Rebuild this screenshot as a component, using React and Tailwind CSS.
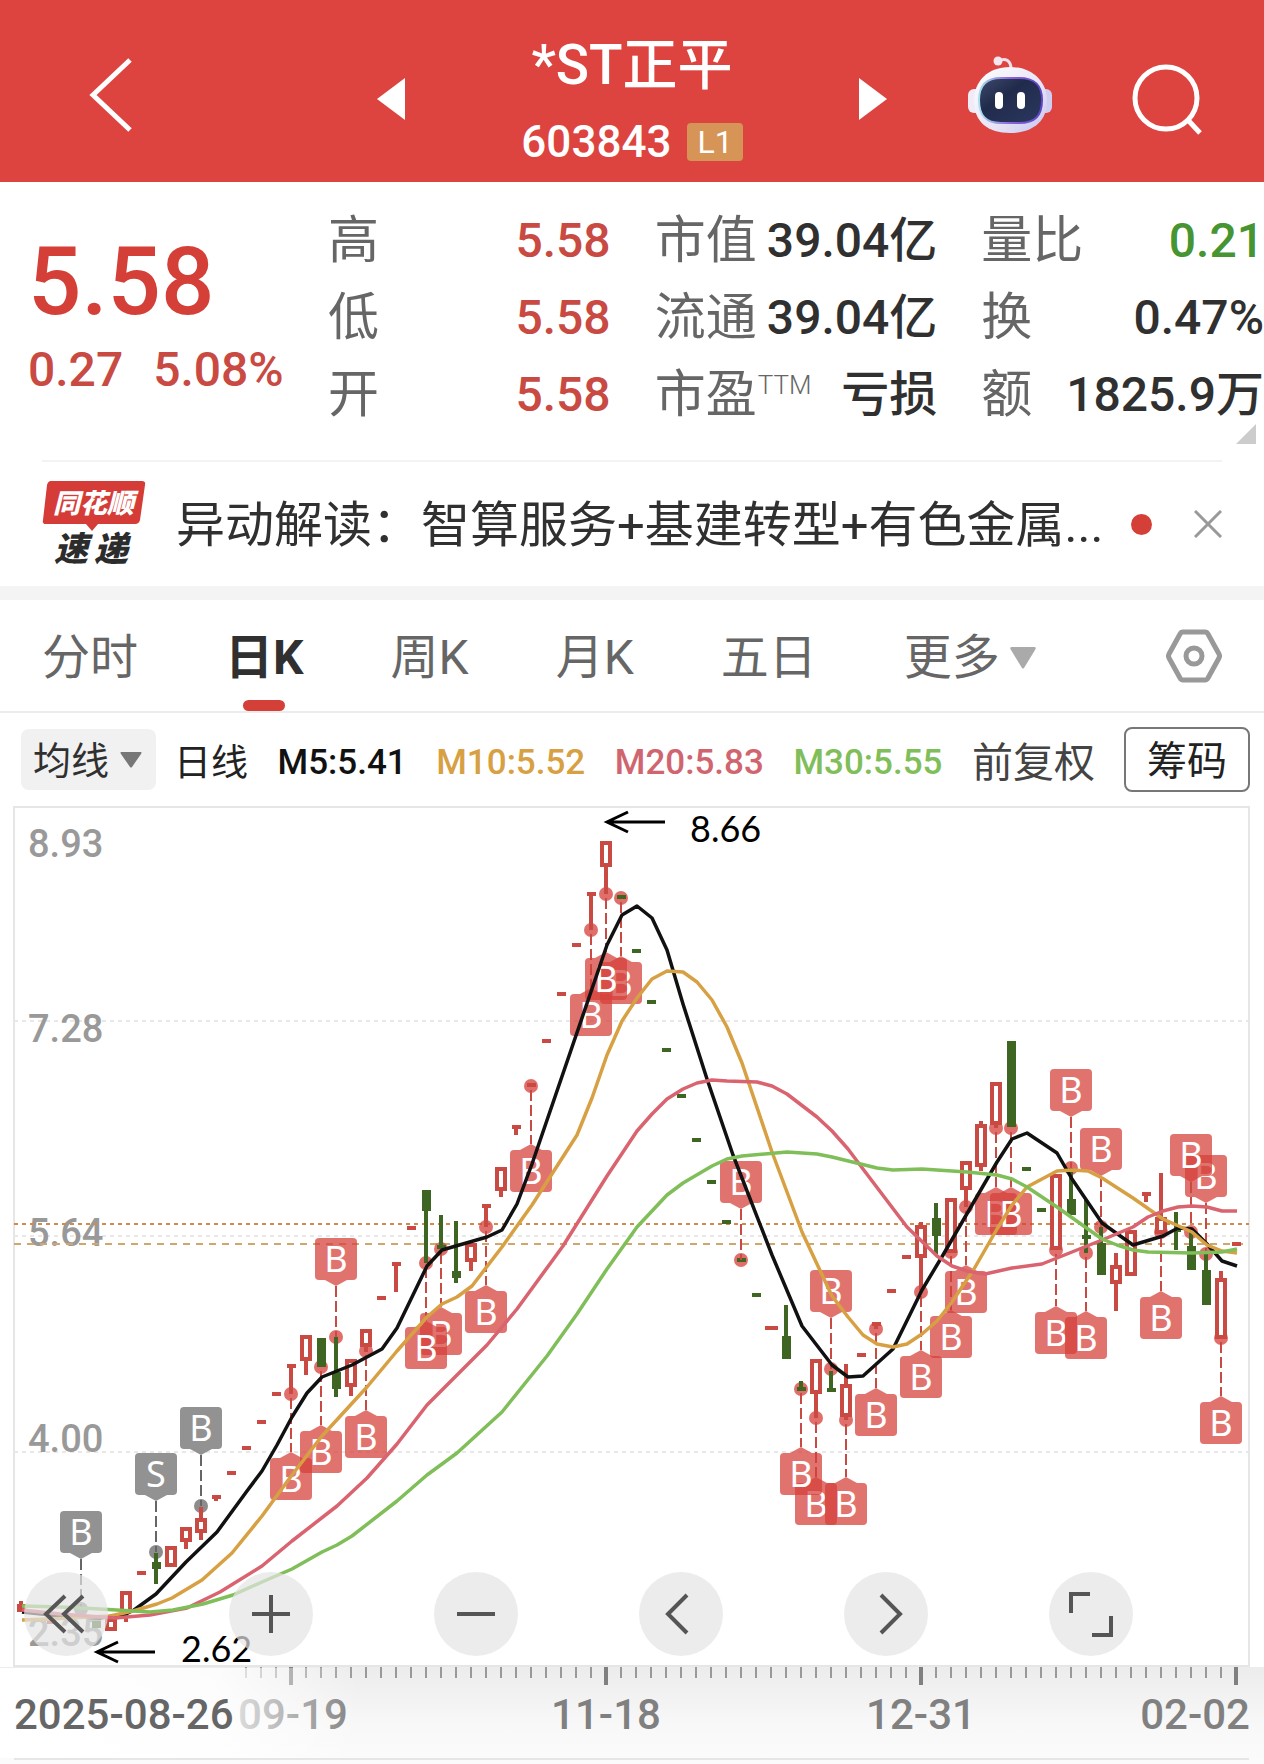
import { useState } from 'react';

const RED = '#c84a42';
const GREEN = '#3f6522';
const PIN = '#d63f39';
const GRAY = '#8c8c8c';

const STATS = [
  [
    { label: '高', value: '5.58', color: 'text-[#c84a42]' },
    { label: '低', value: '5.58', color: 'text-[#c84a42]' },
    { label: '开', value: '5.58', color: 'text-[#c84a42]' },
  ],
  [
    { label: '市值', value: '39.04亿', color: 'text-[#303030]' },
    { label: '流通', value: '39.04亿', color: 'text-[#303030]' },
    { label: '市盈', sup: 'TTM', value: '亏损', color: 'text-[#303030]' },
  ],
  [
    { label: '量比', value: '0.21', color: 'text-[#469432]' },
    { label: '换', value: '0.47%', color: 'text-[#303030]' },
    { label: '额', value: '1825.9万', color: 'text-[#303030]' },
  ],
];

const TABS = ['分时', '日K', '周K', '月K', '五日'];

// one entry per day: i = slot, o/c = body top and bottom, h/l = wick top and bottom
// no body means a flat day, drawn as a dash at d
const CANDLES = [
  { i: 0, up: true, solid: true, o: 1604, c: 1612, h: 1601 },
  { i: 2, up: true, d: 1622 },
  { i: 5, o: 1621, c: 1628 },
  { i: 6, up: true, o: 1618, c: 1631 },
  { i: 7, up: true, o: 1591, c: 1613, l: 1622 },
  { i: 8, up: true, d: 1573 },
  { i: 9, o: 1562, c: 1569, h: 1553, l: 1584 },
  { i: 10, up: true, o: 1546, c: 1567 },
  { i: 11, up: true, o: 1527, c: 1542, l: 1549 },
  { i: 12, up: true, o: 1518, c: 1533, h: 1507, l: 1540 },
  { i: 13, up: true, d: 1497, l: 1501 },
  { i: 14, up: true, d: 1473 },
  { i: 15, up: true, d: 1448 },
  { i: 16, up: true, d: 1422 },
  { i: 17, up: true, d: 1394 },
  { i: 18, up: true, d: 1366, l: 1394 },
  { i: 19, up: true, o: 1335, c: 1361, l: 1375 },
  { i: 20, o: 1338, c: 1367 },
  { i: 21, o: 1372, c: 1389, h: 1337, l: 1397 },
  { i: 22, up: true, o: 1359, c: 1387, l: 1396 },
  { i: 23, up: true, o: 1329, c: 1347, l: 1352 },
  { i: 24, up: true, d: 1298 },
  { i: 25, up: true, d: 1264, l: 1292 },
  { i: 26, up: true, d: 1228 },
  { i: 27, o: 1190, c: 1211, l: 1263 },
  { i: 28, o: 1245, c: 1249, h: 1215 },
  { i: 29, o: 1271, c: 1278, h: 1221, l: 1283 },
  { i: 30, up: true, o: 1243, c: 1262, l: 1271 },
  { i: 31, up: true, d: 1206, l: 1227 },
  { i: 32, up: true, o: 1167, c: 1191, l: 1197 },
  { i: 33, up: true, d: 1127, l: 1135 },
  { i: 34, up: true, d: 1085 },
  { i: 35, up: true, d: 1041 },
  { i: 36, up: true, d: 994 },
  { i: 37, up: true, d: 945 },
  { i: 38, up: true, d: 894, l: 930 },
  { i: 39, up: true, o: 841, c: 867, l: 894 },
  { i: 40, d: 897 },
  { i: 41, d: 951 },
  { i: 42, d: 1002 },
  { i: 43, d: 1050 },
  { i: 44, d: 1096 },
  { i: 45, d: 1140 },
  { i: 46, d: 1182 },
  { i: 47, d: 1222 },
  { i: 48, d: 1260 },
  { i: 49, d: 1295 },
  { i: 50, up: true, d: 1328, wide: true },
  { i: 51, o: 1336, c: 1359, h: 1305 },
  { i: 52, d: 1389, h: 1381, l: 1391 },
  { i: 53, up: true, o: 1359, c: 1394, l: 1418 },
  { i: 54, d: 1390, h: 1371 },
  { i: 55, up: true, o: 1384, c: 1417, h: 1364, l: 1420 },
  { i: 56, up: true, d: 1355 },
  { i: 57, up: true, d: 1324, l: 1329 },
  { i: 58, up: true, d: 1291 },
  { i: 59, up: true, d: 1257 },
  { i: 60, up: true, o: 1225, c: 1258, h: 1222, l: 1292 },
  { i: 61, o: 1218, c: 1236, h: 1203, l: 1254 },
  { i: 62, up: true, o: 1198, c: 1253 },
  { i: 63, up: true, o: 1161, c: 1190, l: 1207 },
  { i: 64, up: true, o: 1124, c: 1167, h: 1121, l: 1171 },
  { i: 65, up: true, o: 1082, c: 1125, l: 1128 },
  { i: 66, o: 1041, c: 1127 },
  { i: 67, d: 1169 },
  { i: 68, d: 1210 },
  { i: 69, up: true, o: 1174, c: 1250 },
  { i: 70, o: 1199, c: 1215, h: 1168 },
  { i: 71, d: 1237, h: 1200, l: 1253 },
  { i: 72, o: 1243, c: 1275, h: 1227 },
  { i: 73, up: true, o: 1265, c: 1284, h: 1253, l: 1311 },
  { i: 74, up: true, o: 1230, c: 1276 },
  { i: 75, up: true, d: 1194, l: 1202 },
  { i: 76, up: true, o: 1217, c: 1234, h: 1173 },
  { i: 77, o: 1230, c: 1232, h: 1212, l: 1250 },
  { i: 78, o: 1246, c: 1270, h: 1229 },
  { i: 79, o: 1270, c: 1305, h: 1254 },
  { i: 80, up: true, o: 1278, c: 1339, h: 1271 },
  { i: 81, up: true, d: 1244 },
];

// trade pins: dot = price point, box = top edge of the label
const PINS = [
  { i: 4, dot: 1609, box: 1511, gray: true },
  { i: 9, dot: 1552, box: 1453, gray: true, text: 'S' },
  { i: 12, dot: 1506, box: 1407, gray: true },
  { i: 18, dot: 1394, box: 1458 },
  { i: 20, dot: 1367, box: 1431 },
  { i: 21, dot: 1337, box: 1238 },
  { i: 23, dot: 1351, box: 1416 },
  { i: 28, dot: 1249, box: 1313 },
  { i: 27, dot: 1263, box: 1327 },
  { i: 31, dot: 1227, box: 1291 },
  { i: 34, dot: 1086, box: 1150 },
  { i: 40, dot: 898, box: 962 },
  { i: 38, dot: 930, box: 994 },
  { i: 39, dot: 894, box: 958 },
  { i: 48, dot: 1260, box: 1161 },
  { i: 53, dot: 1418, box: 1483 },
  { i: 52, dot: 1389, box: 1453 },
  { i: 54, dot: 1369, box: 1270 },
  { i: 55, dot: 1420, box: 1483 },
  { i: 57, dot: 1329, box: 1394 },
  { i: 60, dot: 1292, box: 1356 },
  { i: 62, dot: 1252, box: 1316 },
  { i: 63, dot: 1207, box: 1271 },
  { i: 65, dot: 1128, box: 1193 },
  { i: 66, dot: 1128, box: 1193 },
  { i: 69, dot: 1250, box: 1312 },
  { i: 70, dot: 1168, box: 1069 },
  { i: 71, dot: 1253, box: 1317 },
  { i: 72, dot: 1227, box: 1128 },
  { i: 76, dot: 1232, box: 1297 },
  { i: 79, dot: 1254, box: 1155 },
  { i: 78, dot: 1232, box: 1134 },
  { i: 80, dot: 1338, box: 1402 },
];

const LINES = [
  {
    color: '#111111',
    points:
      '22,1612 60,1616 100,1618 126,1614 134,1610 156,1594 186,1562 217,1532 247,1491 262,1471 277,1445 292,1417 307,1393 322,1377 352,1365 382,1349 397,1328 427,1266 442,1250 487,1237 502,1230 517,1204 532,1164 607,945 622,915 637,906 652,918 667,950 683,1004 707,1079 733,1155 772,1255 802,1326 832,1365 848,1377 863,1376 893,1349 922,1290 943,1255 997,1162 1012,1139 1027,1133 1057,1153 1072,1179 1102,1223 1133,1245 1163,1236 1178,1228 1192,1229 1207,1244 1222,1261 1237,1266',
  },
  {
    color: '#d7a043',
    points:
      '22,1620 50,1619 110,1616 133,1611 157,1604 172,1598 202,1580 232,1553 262,1516 292,1475 322,1436 367,1387 397,1351 427,1317 442,1304 457,1297 472,1286 502,1247 532,1205 577,1135 592,1098 607,1055 622,1021 637,998 652,979 667,971 683,972 697,982 712,1000 727,1027 742,1063 772,1152 802,1232 832,1296 848,1317 863,1335 877,1344 893,1347 907,1344 922,1334 937,1321 952,1302 974,1269 997,1229 1012,1205 1027,1187 1057,1171 1072,1170 1088,1171 1102,1178 1133,1198 1163,1219 1192,1232 1207,1245 1222,1251 1237,1253',
  },
  {
    color: '#d9636f',
    points:
      '22,1610 60,1614 115,1618 150,1615 187,1608 220,1592 262,1566 292,1541 337,1506 367,1478 397,1444 427,1405 457,1375 487,1345 517,1309 563,1246 607,1176 637,1131 652,1114 667,1099 683,1089 697,1083 712,1080 727,1081 757,1082 772,1086 787,1094 817,1117 832,1131 848,1149 863,1169 907,1227 937,1256 952,1266 967,1271 985,1274 1012,1268 1042,1264 1072,1252 1102,1240 1133,1227 1148,1217 1163,1211 1178,1207 1192,1206 1207,1207 1222,1211 1237,1211',
  },
  {
    color: '#7fbe58',
    points:
      '22,1606 60,1607 100,1609 150,1612 173,1610 203,1604 233,1595 262,1582 292,1569 322,1552 337,1545 352,1536 397,1501 427,1475 457,1453 502,1412 547,1356 577,1314 607,1269 637,1227 667,1195 683,1183 712,1166 727,1159 742,1156 787,1152 817,1154 832,1157 877,1168 893,1170 922,1169 967,1172 997,1175 1012,1179 1027,1187 1057,1207 1102,1239 1117,1245 1133,1250 1148,1252 1192,1253 1222,1252 1237,1249',
  },
];

const PRICES = [
  ['8.93', 857],
  ['7.28', 1042],
  ['5.64', 1246],
  ['4.00', 1452],
  ['2.35', 1646],
];

const slotX = (i) => 21 + i * 15;

const Candle = ({ i, up, solid, wide, o, c, d, h, l }) => {
  const x = slotX(i);
  const color = up ? RED : GREEN;
  const top = d ? d : o;
  const bottom = d ? d : c;
  const half = wide ? 6 : 4;
  return (
    <g>
      {h && <line x1={x} x2={x} y1={h} y2={top} stroke={color} strokeWidth="4" />}
      {l && <line x1={x} x2={x} y1={bottom} y2={l} stroke={color} strokeWidth="4" />}
      {d && <rect x={x - half} y={d - 2} width={half * 2 + 1} height="4" fill={color} />}
      {o && up && !solid && (
        <rect x={x - 4} y={o + 2} width="8" height={c - o - 4} fill="#fff" stroke={color} strokeWidth="4" />
      )}
      {o && (!up || solid) && <rect x={x - 4} y={o} width="9" height={c - o} fill={color} />}
    </g>
  );
};

const Pin = ({ i, dot, box, gray, text = 'B' }) => {
  const x = slotX(i);
  const below = box > dot;
  const edge = below ? box : box + 42;
  const tip = below ? box - 6 : box + 48;
  return (
    <g>
      <line
        x1={x}
        x2={x}
        y1={below ? dot + 4 : tip}
        y2={below ? tip : dot}
        stroke={gray ? '#666' : RED}
        strokeWidth="2"
        strokeDasharray="11 4"
      />
      <g fill={gray ? GRAY : PIN} fillOpacity={gray ? 0.95 : 0.73}>
        <path d={`M${x - 11} ${edge} L${x} ${tip} L${x + 11} ${edge} Z`} />
        <rect x={x - 21} y={box} width="42" height="42" rx="4" />
      </g>
      <text x={x} y={box + 34} textAnchor="middle" fontSize="36" fill="#fff" className="font-[Noto_Sans,sans-serif]">
        {text}
      </text>
    </g>
  );
};

const StockChart = () => {
  const ticks = [];
  for (let i = 15; i <= 81; i++) ticks.push(i);

  return (
    <svg viewBox="0 806 1264 958" className="block h-auto w-full" role="img" aria-label="日K">
      <defs>
        <linearGradient id="axisBg" x1="0" x2="0" y1="0" y2="1">
          <stop offset="0" stopColor="#ececec" />
          <stop offset="0.6" stopColor="#f8f8f8" />
          <stop offset="1" stopColor="#fbfbfb" />
        </linearGradient>
        <linearGradient id="axisFade" x1="0" x2="1" y1="0" y2="0">
          <stop offset="0" stopColor="#fff" />
          <stop offset="0.6" stopColor="#fff" stopOpacity="0.85" />
          <stop offset="1" stopColor="#fff" stopOpacity="0" />
        </linearGradient>
      </defs>

      <rect x="0" y="1667" width="1264" height="97" fill="url(#axisBg)" />

      {/* frame and grid */}
      <rect x="14" y="807" width="1235" height="859" fill="#fff" stroke="#e6e6e6" strokeWidth="2" />
      {[1021, 1236, 1452].map((y) => (
        <line key={y} x1="14" x2="1249" y1={y} y2={y} stroke="#e8e8e8" strokeWidth="2" strokeDasharray="4 4" />
      ))}
      {PRICES.map(([label, y]) => (
        <text key={label} x="28" y={y} fontSize="38" fill="#999" className="font-[Roboto,sans-serif] font-medium">
          {label}
        </text>
      ))}
      <line x1="14" x2="1249" y1="1224" y2="1224" stroke="#d08c4e" strokeWidth="2" strokeDasharray="4 4" />
      <line x1="14" x2="1249" y1="1244" y2="1244" stroke="#cfa66e" strokeWidth="2" strokeDasharray="7 6" />

      {PINS.map((p) => (
        <circle
          key={p.i}
          cx={slotX(p.i)}
          cy={p.dot}
          r="7"
          fill={p.gray ? GRAY : PIN}
          fillOpacity={p.gray ? 1 : 0.75}
        />
      ))}
      {CANDLES.map((c) => (
        <Candle key={c.i} {...c} />
      ))}
      {PINS.map((p) => (
        <Pin key={p.i} {...p} />
      ))}
      {LINES.map((l) => (
        <polyline key={l.color} points={l.points} fill="none" stroke={l.color} strokeWidth="3.5" strokeLinejoin="round" />
      ))}

      {/* highest and lowest price */}
      <g fill="none" stroke="#000" strokeWidth="3">
        <path d="M665 822H607M628 812L607 822L628 832" />
        <path d="M155 1652H97M118 1642L97 1652L118 1662" />
      </g>
      <g fontSize="36" fill="#000" className="font-[Lato,sans-serif]">
        <text x="690" y="842">8.66</text>
        <text x="181" y="1662">2.62</text>
      </g>

      {/* time axis */}
      {ticks.map((i) => {
        const major = (i - 18) % 21 === 0;
        return (
          <line
            key={i}
            x1={slotX(i)}
            x2={slotX(i)}
            y1="1667"
            y2={major ? 1685 : 1678}
            stroke={major ? '#808080' : '#999'}
            strokeWidth={major ? 4 : 2}
          />
        );
      })}
      <g fontSize="42" fill="#808080" className="font-[Roboto,sans-serif] font-medium">
        <text x="293" y="1729" textAnchor="middle">09-19</text>
        <text x="606" y="1729" textAnchor="middle">11-18</text>
        <text x="921" y="1729" textAnchor="middle">12-31</text>
        <text x="1250" y="1729" textAnchor="end">02-02</text>
        <rect x="0" y="1668" width="360" height="90" fill="url(#axisFade)" />
        <text x="14" y="1729" fill="#666">2025-08-26</text>
      </g>
      <line x1="14" x2="1249" y1="1759" y2="1759" stroke="#e6e6e6" strokeWidth="2" />
    </svg>
  );
};

const CONTROLS = [
  { name: '最早', d: 'M41 24L22 42L41 60M59 24L40 42L59 60' },
  { name: '放大', d: 'M42 23V61M23 42H61' },
  { name: '缩小', d: 'M23 42H61' },
  { name: '左移', d: 'M48 23L29 42L48 61' },
  { name: '右移', d: 'M37 23L56 42L37 61' },
  { name: '全屏', d: 'M22 41V22H41M43 63H62V44' },
];

const RobotIcon = () => (
  <svg viewBox="0 0 84 78" className="h-[78px] w-[84px]">
    <defs>
      <linearGradient id="shell" x1="0" x2="1" y1="0" y2="1">
        <stop offset="0" stopColor="#ffffff" />
        <stop offset="0.6" stopColor="#e8e4f6" />
        <stop offset="1" stopColor="#c3c4ee" />
      </linearGradient>
      <linearGradient id="visor" x1="0" x2="1" y1="0" y2="1">
        <stop offset="0" stopColor="#3f4a6c" />
        <stop offset="0.4" stopColor="#202b4c" />
        <stop offset="1" stopColor="#2c3760" />
      </linearGradient>
      <linearGradient id="rim" x1="0" x2="1" y1="0" y2="0">
        <stop offset="0" stopColor="#a8e0ee" />
        <stop offset="0.5" stopColor="#8a63d8" />
        <stop offset="1" stopColor="#5a45c4" />
      </linearGradient>
    </defs>
    <path d="M30 5C38 1 43 5 43 13" fill="none" stroke="#efdfea" strokeWidth="3" />
    <circle cx="30" cy="5" r="4.5" fill="#f3e6ef" />
    <rect x="0" y="33" width="14" height="24" rx="6" fill="#f0ebf7" />
    <rect x="70" y="33" width="14" height="24" rx="6" fill="#cfcdf1" />
    <path
      d="M42 11C64 11 79 25 79 45C79 66 64 77 42 77C20 77 6 66 6 45C6 25 20 11 42 11Z"
      fill="url(#shell)"
    />
    <path
      d="M33 22H51C67 22 74 29 74 44C74 60 67 67 51 67H33C18 67 11 60 11 44C11 29 18 22 33 22Z"
      fill="url(#visor)"
      stroke="url(#rim)"
      strokeWidth="2"
    />
    <rect x="27" y="36" width="8" height="17" rx="4" fill="#fff" />
    <rect x="49" y="36" width="8" height="17" rx="4" fill="#fff" />
  </svg>
);

const Header = () => (
  <header className="grid h-[182px] grid-cols-[1fr_510px_1fr] items-center bg-[#dd4440] text-white">
    <div className="pt-2 pl-[88px]">
      <button aria-label="返回" className="block">
        <svg viewBox="0 0 46 76" className="h-[76px] w-[46px]" fill="none" stroke="#fff" strokeWidth="5">
          <path d="M42 3L5 38L42 73" />
        </svg>
      </button>
    </div>
    <div className="flex items-center justify-between">
      <button aria-label="上一只" className="mt-4">
        <svg viewBox="0 0 28 42" className="h-[42px] w-7" fill="#fff">
          <path d="M28 0V42L0 21Z" />
        </svg>
      </button>
      <div className="flex flex-col items-center pt-6">
        <h1 className="text-[55px] leading-[78px] font-medium">*ST正平</h1>
        <div className="flex items-center gap-4">
          <span className="text-[44px] leading-[76px] font-medium">603843</span>
          <span className="rounded-sm bg-[#d69557] px-2.5 text-[32px] leading-[38px]">L1</span>
        </div>
      </div>
      <button aria-label="下一只" className="mt-4">
        <svg viewBox="0 0 28 42" className="h-[42px] w-7" fill="#fff">
          <path d="M0 0V42L28 21Z" />
        </svg>
      </button>
    </div>
    <div className="flex items-center justify-between pt-2 pr-[60px] pl-[81px]">
      <button aria-label="智能助手">
        <RobotIcon />
      </button>
      <button aria-label="搜索" className="pt-2">
        <svg viewBox="0 0 72 72" className="size-[72px]" fill="none" stroke="#fff" strokeWidth="5">
          <circle cx="34" cy="35" r="31" />
          <path d="M55 56L68 70" />
        </svg>
      </button>
    </div>
  </header>
);

const Quote = () => (
  <section className="relative flex pt-5 pb-[27px]">
    <div className="w-[328px] shrink-0 pt-8 pl-7 text-[#c84a42]">
      <div className="text-[94px] leading-[96px] font-medium text-[#d43f37]">5.58</div>
      <div className="flex gap-[30px] text-[48px] leading-[80px] font-medium">
        <span>0.27</span>
        <span>5.08%</span>
      </div>
    </div>
    <div className="grid flex-1 grid-cols-3 gap-x-11">
      {STATS.map((column, n) => (
        <dl key={n}>
          {column.map((s) => (
            <div key={s.label} className="flex h-[77px] items-center justify-between whitespace-nowrap">
              <dt className="flex text-[51px] leading-[79px] text-[#666]">
                {s.label}
                {s.sup && <span className="pl-px text-[26px] leading-[60px] font-light">{s.sup}</span>}
              </dt>
              <dd className={`text-[48px] leading-[79px] font-medium ${s.color}`}>{s.value}</dd>
            </div>
          ))}
        </dl>
      ))}
    </div>
    <svg viewBox="0 0 20 20" className="absolute right-2 bottom-4 size-5" fill="#ccc">
      <path d="M20 0V20H0Z" />
    </svg>
  </section>
);

const News = () => (
  <section className="mx-[42px] flex h-[126px] items-center border-t-2 border-[#f3f3f3]">
    <svg viewBox="0 0 104 96" className="mt-2 h-24 w-[104px] shrink-0" role="img" aria-label="同花顺速递">
      <path
        d="M9 1H100Q104 1 103 5L98 40Q97 44 93 44H56L50 51L44 44H4Q0 44 1 40L5 5Q6 1 9 1Z"
        fill="#d63c37"
      />
      <g className="font-[Noto_Sans_CJK_SC,sans-serif] font-black italic">
        <text x="11" y="33" fontSize="27" fill="#fff">同花顺</text>
        <text x="12" y="81" fontSize="34" fill="#2c2c2c">速</text>
        <text x="52" y="81" fontSize="34" fill="#2c2c2c">递</text>
      </g>
    </svg>
    <a href="#news" className="ml-[30px] flex-1 truncate pt-1 text-[49px] leading-[80px] text-[#303030]">
      异动解读：智算服务+基建转型+有色金属...
    </a>
    <span className="mr-[42px] size-[21px] rounded-full bg-[#d43f37]" />
    <button aria-label="关闭">
      <svg viewBox="0 0 28 28" className="size-7" fill="none" stroke="#999" strokeWidth="3">
        <path d="M1 1L27 27M27 1L1 27" />
      </svg>
    </button>
  </section>
);

const TabBar = ({ active, onSelect }) => (
  <nav className="flex h-[113px] items-stretch border-b-2 border-[#ececec] px-[42px] text-[48px] text-[#666]">
    <div className="flex gap-[87px]">
      {TABS.map((tab) => (
        <button
          key={tab}
          onClick={() => onSelect(tab)}
          className={`relative pt-1 whitespace-nowrap ${tab === active ? 'font-bold text-[#303030]' : ''}`}
        >
          {tab}
          {tab === active && (
            <span className="absolute bottom-0 left-1/2 h-[11px] w-[42px] -translate-x-1/2 rounded-full bg-[#d43f37]" />
          )}
        </button>
      ))}
      <button aria-haspopup="menu" className="flex items-center gap-2.5 pt-1 whitespace-nowrap">
        更多
        <svg viewBox="0 0 26 22" className="h-[22px] w-[26px]" fill="#aaa">
          <path d="M2 0H24Q27 0 25 3L14 21Q13 22 12 21L1 3Q-1 0 2 0Z" />
        </svg>
      </button>
    </div>
    <button aria-label="设置" className="ml-auto">
      <svg viewBox="0 0 56 54" className="h-[54px] w-14" fill="none" stroke="#999" strokeWidth="5" strokeLinejoin="round">
        <path d="M17 3H39Q41 3 42 5L53 25Q54 27 53 29L42 49Q41 51 39 51H17Q15 51 14 49L3 29Q2 27 3 25L14 5Q15 3 17 3Z" />
        <circle cx="28" cy="27" r="8" />
      </svg>
    </button>
  </nav>
);

const Indicators = () => (
  <div className="flex h-[93px] items-center pr-3.5 pl-[21px] whitespace-nowrap">
    <label className="relative flex items-center">
      <select
        aria-label="指标"
        defaultValue="均线"
        className="h-[61px] w-[135px] appearance-none rounded-lg bg-[#f1f1f1] pt-1 pl-3 text-[38px] text-[#303030]"
      >
        <option>均线</option>
      </select>
      <svg viewBox="0 0 22 16" className="pointer-events-none absolute right-3.5 h-4 w-[22px]" fill="#777">
        <path d="M1 0H21Q22 0 21 2L12 15Q11 16 10 15L1 2Q0 0 1 0Z" />
      </svg>
    </label>
    <div className="flex flex-1 items-center justify-between pt-2 pr-[29px] pl-[18px] text-[35px] font-medium">
      <span className="text-[37px] font-normal text-[#222]">日线</span>
      <span className="text-[#111]">M5:5.41</span>
      <span className="text-[#d7a043]">M10:5.52</span>
      <span className="text-[#d0656f]">M20:5.83</span>
      <span className="text-[#7fbe58]">M30:5.55</span>
      <span className="text-[41px] font-normal text-[#444]">前复权</span>
    </div>
    <button className="h-[65px] rounded-lg border-2 border-[#777] px-[21px] pt-1 text-[40px] leading-[56px] text-[#222]">
      筹码
    </button>
  </div>
);

const App = () => {
  const [active, setActive] = useState('日K');

  return (
    <div className="min-h-screen bg-white font-[Roboto,Noto_Sans_CJK_SC,sans-serif]">
      <Header />
      <main>
        <Quote />
        <News />
        <div className="h-3.5 bg-[#f4f4f4]" />
        <TabBar active={active} onSelect={setActive} />
        <Indicators />
        <div className="relative">
          <StockChart />
          <div className="absolute inset-x-0 bottom-[108px] flex gap-[121px] pl-6">
            {CONTROLS.map((c) => (
              <button key={c.name} aria-label={c.name} className="size-[84px] shrink-0 rounded-full bg-[#e4e4e4]/70">
                <svg viewBox="0 0 84 84" fill="none" stroke="#555" strokeWidth="4">
                  <path d={c.d} />
                </svg>
              </button>
            ))}
          </div>
        </div>
      </main>
    </div>
  );
};

export default App;
